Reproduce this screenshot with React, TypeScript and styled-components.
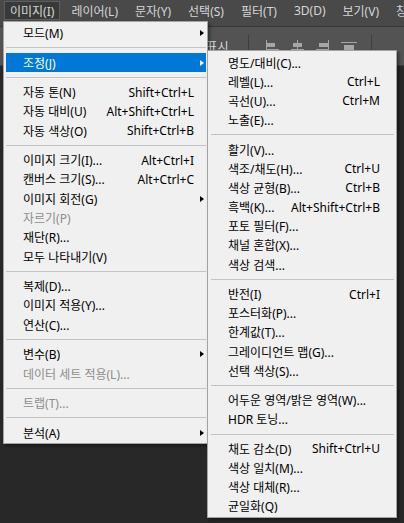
import styled, { createGlobalStyle } from "styled-components"

const GlobalStyle = createGlobalStyle`
  html, body {
    margin: 0;
    padding: 0;
    background: #282828;
  }
  body {
    width: 404px;
    height: 523px;
    overflow: hidden;
    font-family: "Noto Sans", "Noto Sans CJK KR", sans-serif;
  }
`

// Fond de l'application (zone de travail sombre)
const Screen = styled.div`
  position: relative;
  width: 404px;
  height: 523px;
  display: flex;
  flex-direction: column;
  background: #282828;
  overflow: hidden;
`

const MenuBar = styled.div`
  height: 27px;
  box-sizing: border-box;
  display: flex;
  align-items: flex-start;
  gap: 5px;
  padding: 1px 0 0 4px;
  background: #494949;
  border-bottom: 1px solid #363636;
`

const BarItem = styled.div<{ $open?: boolean }>`
  height: 19px;
  box-sizing: border-box;
  padding: 0 5px 0 5px;
  display: flex;
  align-items: center;
  font-size: 12px;
  color: #d6d6d6;
  white-space: nowrap;
  border: 1px solid ${(p) => (p.$open ? "#5e5e5e" : "transparent")};
  background: ${(p) => (p.$open ? "#393939" : "transparent")};
`

const OptionsBar = styled.div`
  height: 39px;
  box-sizing: border-box;
  display: flex;
  align-items: center;
  padding: 0 0 0 128px;
  background: #535353;
  border-bottom: 1px solid #3c3c3c;
`

const OptionLabel = styled.span`
  font-size: 12px;
  color: #dcdcdc;
  white-space: nowrap;
  margin-left: 6px;
`

const CheckBox = styled.span`
  width: 11px;
  height: 11px;
  border: 1px solid #8a8a8a;
  background: #454545;
  box-sizing: border-box;
`

const VSep = styled.span<{ $l: number; $r: number }>`
  width: 1px;
  height: 22px;
  background: #3e3e3e;
  margin: 8px ${(p) => p.$r}px 0 ${(p) => p.$l}px;
  align-self: flex-start;
`

const IconGroup = styled.div`
  display: flex;
  gap: 10px;
  align-items: center;
  margin-top: 3px;
`

const Workspace = styled.div`
  flex: 1;
  background: #282828;
`

// Menus déroulants posés par-dessus le reste
const Menu = styled.div<{ $left: number; $top: number; $width: number; $padTop: number }>`
  position: absolute;
  left: ${(p) => p.$left}px;
  top: ${(p) => p.$top}px;
  width: ${(p) => p.$width}px;
  box-sizing: border-box;
  padding: ${(p) => p.$padTop}px 1px 1px 2px;
  background: #f0f0f0;
  border: 1px solid #a3a3a3;
  box-shadow: 2px 2px 3px rgba(0, 0, 0, 0.4);
  font-size: 12px;
`

const Row = styled.div<{ $h: number; $pad: number; $active?: boolean; $disabled?: boolean }>`
  height: ${(p) => p.$h}px;
  display: flex;
  align-items: center;
  padding-left: ${(p) => p.$pad}px;
  white-space: nowrap;
  background: ${(p) => (p.$active ? "#0078d7" : "transparent")};
  color: ${(p) => (p.$active ? "#ffffff" : p.$disabled ? "#8d8d8d" : "#000000")};
`

const Label = styled.span`
  flex: 1;
`

const Shortcut = styled.span``

const ArrowCell = styled.span<{ $w: number }>`
  width: ${(p) => p.$w}px;
  height: 100%;
  display: flex;
  align-items: center;
  padding-left: 6px;
  box-sizing: border-box;
`

const Arrow = styled.span<{ $light?: boolean }>`
  width: 0;
  height: 0;
  border-top: 3.5px solid transparent;
  border-bottom: 3.5px solid transparent;
  border-left: 4px solid ${(p) => (p.$light ? "#ffffff" : "#000000")};
`

const Separator = styled.div<{ $inset: number }>`
  height: 10.2px;
  display: flex;
  align-items: center;
  padding: 0 ${(p) => p.$inset}px;

  &::before {
    content: "";
    flex: 1;
    height: 1px;
    background: #c3c3c3;
  }
`

type Entry = {
  label?: string
  shortcut?: string
  sub?: boolean
  disabled?: boolean
  active?: boolean
  sep?: boolean
}

const imageMenu: Entry[] = [
  { label: "모드(M)", sub: true },
  { sep: true },
  { label: "조정(J)", sub: true, active: true },
  { sep: true },
  { label: "자동 톤(N)", shortcut: "Shift+Ctrl+L" },
  { label: "자동 대비(U)", shortcut: "Alt+Shift+Ctrl+L" },
  { label: "자동 색상(O)", shortcut: "Shift+Ctrl+B" },
  { sep: true },
  { label: "이미지 크기(I)...", shortcut: "Alt+Ctrl+I" },
  { label: "캔버스 크기(S)...", shortcut: "Alt+Ctrl+C" },
  { label: "이미지 회전(G)", sub: true },
  { label: "자르기(P)", disabled: true },
  { label: "재단(R)..." },
  { label: "모두 나타내기(V)" },
  { sep: true },
  { label: "복제(D)..." },
  { label: "이미지 적용(Y)..." },
  { label: "연산(C)..." },
  { sep: true },
  { label: "변수(B)", sub: true },
  { label: "데이터 세트 적용(L)...", disabled: true },
  { sep: true },
  { label: "트랩(T)...", disabled: true },
  { sep: true },
  { label: "분석(A)", sub: true },
]

const adjustMenu: Entry[] = [
  { label: "명도/대비(C)..." },
  { label: "레벨(L)...", shortcut: "Ctrl+L" },
  { label: "곡선(U)...", shortcut: "Ctrl+M" },
  { label: "노출(E)..." },
  { sep: true },
  { label: "활기(V)..." },
  { label: "색조/채도(H)...", shortcut: "Ctrl+U" },
  { label: "색상 균형(B)...", shortcut: "Ctrl+B" },
  { label: "흑백(K)...", shortcut: "Alt+Shift+Ctrl+B" },
  { label: "포토 필터(F)..." },
  { label: "채널 혼합(X)..." },
  { label: "색상 검색..." },
  { sep: true },
  { label: "반전(I)", shortcut: "Ctrl+I" },
  { label: "포스터화(P)..." },
  { label: "한계값(T)..." },
  { label: "그레이디언트 맵(G)..." },
  { label: "선택 색상(S)..." },
  { sep: true },
  { label: "어두운 영역/밝은 영역(W)..." },
  { label: "HDR 토닝..." },
  { sep: true },
  { label: "채도 감소(D)", shortcut: "Shift+Ctrl+U" },
  { label: "색상 일치(M)..." },
  { label: "색상 대체(R)..." },
  { label: "균일화(Q)" },
]

interface DropMenuProps {
  entries: Entry[]
  left: number
  top: number
  width: number
  padTop: number
  rowH: number
  pad: number
  arrowW: number
  sepInset: number
}

function DropMenu({ entries, left, top, width, padTop, rowH, pad, arrowW, sepInset }: DropMenuProps) {
  return (
    <Menu $left={left} $top={top} $width={width} $padTop={padTop}>
      {entries.map((e, i) =>
        e.sep ? (
          <Separator key={i} $inset={sepInset} />
        ) : (
          <Row key={i} $h={rowH} $pad={pad} $active={e.active} $disabled={e.disabled}>
            <Label>{e.label}</Label>
            {e.shortcut && <Shortcut>{e.shortcut}</Shortcut>}
            <ArrowCell $w={arrowW}>{e.sub && <Arrow $light={e.active} />}</ArrowCell>
          </Row>
        )
      )}
    </Menu>
  )
}

function AlignIcon({ kind }: { kind: "left" | "center" | "right" | "top" }) {
  const c = "#a6a6a6"
  if (kind === "top") {
    return (
      <svg width="18" height="16" viewBox="0 0 18 16">
        <rect x="1" y="2" width="16" height="1" fill={c} />
        <rect x="4" y="5" width="10" height="8" fill={c} />
      </svg>
    )
  }
  const lineX = kind === "left" ? 1 : kind === "center" ? 7 : 13
  return (
    <svg width="15" height="16" viewBox="0 0 15 16">
      <rect x={lineX} y="0" width="1" height="16" fill={c} />
      {kind === "left" && (
        <>
          <rect x="2" y="3" width="8" height="4" fill={c} />
          <rect x="2" y="9" width="12" height="4" fill={c} />
        </>
      )}
      {kind === "center" && (
        <>
          <rect x="3" y="3" width="9" height="4" fill={c} />
          <rect x="1" y="9" width="13" height="4" fill={c} />
        </>
      )}
      {kind === "right" && (
        <>
          <rect x="4" y="3" width="9" height="4" fill={c} />
          <rect x="1" y="9" width="12" height="4" fill={c} />
        </>
      )}
    </svg>
  )
}

const barItems = ["이미지(I)", "레이어(L)", "문자(Y)", "선택(S)", "필터(T)", "3D(D)", "보기(V)", "창"]

export default function App() {
  return (
    <>
      <GlobalStyle />
      <Screen>
        <MenuBar>
          {barItems.map((t, i) => (
            <BarItem key={t} $open={i === 0}>
              {t}
            </BarItem>
          ))}
        </MenuBar>
        <OptionsBar>
          <CheckBox />
          <OptionLabel>변형 컨트롤 표시</OptionLabel>
          <VSep $l={19} $r={16} />
          <IconGroup>
            <AlignIcon kind="left" />
            <AlignIcon kind="center" />
            <AlignIcon kind="right" />
            <AlignIcon kind="top" />
          </IconGroup>
          <VSep $l={13} $r={10} />
        </OptionsBar>
        <Workspace />

        <DropMenu
          entries={imageMenu}
          left={3}
          top={21}
          width={205}
          padTop={1.5}
          rowH={19.3}
          pad={17}
          arrowW={12}
          sepInset={0}
        />
        <DropMenu
          entries={adjustMenu}
          left={207}
          top={50}
          width={190}
          padTop={2}
          rowH={19.2}
          pad={18}
          arrowW={15}
          sepInset={1}
        />
      </Screen>
    </>
  )
}
